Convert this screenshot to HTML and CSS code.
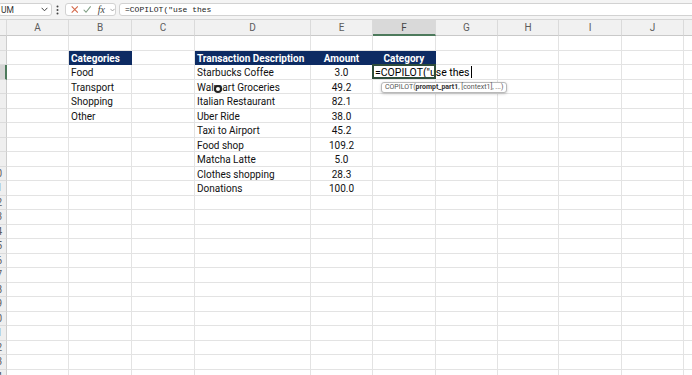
FILE: index.html
```html
<!DOCTYPE html>
<html lang="en">
<head>
    <meta charset="UTF-8">
    <meta name="viewport" content="width=device-width, initial-scale=1.0">
    <title>Expenses - Excel</title>
    <link rel="stylesheet" href="styles.css">
</head>
<body>
    <div class="formula-bar">
        <div class="name-box">
            <span class="name-text">UM</span>
            <svg class="chev" width="7" height="5" viewBox="0 0 7 5"><path d="M0.6 0.8 L3.5 3.8 L6.4 0.8" fill="none" stroke="#444" stroke-width="1"/></svg>
        </div>
        <svg class="dots" width="3" height="10" viewBox="0 0 3 10"><circle cx="1.5" cy="1.5" r="1" fill="#444"/><circle cx="1.5" cy="5" r="1" fill="#444"/><circle cx="1.5" cy="8.5" r="1" fill="#444"/></svg>
        <div class="fx-box">
            <svg width="9" height="9" viewBox="0 0 9 9"><path d="M0.8 0.8 L8.2 8.2 M8.2 0.8 L0.8 8.2" stroke="#d4694b" stroke-width="1.3" fill="none"/></svg>
            <svg width="10" height="9" viewBox="0 0 10 9"><path d="M0.8 4.8 L3.6 7.8 L9.2 0.8" stroke="#7f9e84" stroke-width="1.3" fill="none"/></svg>
            <span class="fx">fx</span>
            <svg width="6" height="4" viewBox="0 0 6 4"><path d="M0.5 0.6 L3 3.2 L5.5 0.6" fill="none" stroke="#888" stroke-width="0.9"/></svg>
        </div>
        <div class="formula-input">=COPILOT("use thes</div>
    </div>

    <div class="sheet" id="sheet"></div>

    <script>
        var cols = ["", "A", "B", "C", "D", "E", "F", "G", "H", "I", "J", "K"];
        var rowCount = 24;
        var activeRow = 3;
        var activeCol = "F";

        var data = {
            2: {B: "Categories", D: "Transaction Description", E: "Amount", F: "Category"},
            3: {B: "Food", D: "Starbucks Coffee", E: "3.0"},
            4: {B: "Transport", D: "Walmart Groceries", E: "49.2"},
            5: {B: "Shopping", D: "Italian Restaurant", E: "82.1"},
            6: {B: "Other", D: "Uber Ride", E: "38.0"},
            7: {D: "Taxi to Airport", E: "45.2"},
            8: {D: "Food shop", E: "109.2"},
            9: {D: "Matcha Latte", E: "5.0"},
            10: {D: "Clothes shopping", E: "28.3"},
            11: {D: "Donations", E: "100.0"}
        };

        var sheet = document.querySelector("#sheet");

        // column letters
        for(var c = 0; c < cols.length; c++){
            var head = document.createElement("div");
            head.className = c === 0 ? "corner" : "col-head";
            if(cols[c] === activeCol) head.className += " active";
            head.textContent = cols[c];
            sheet.appendChild(head);
        }

        for(var r = 1; r <= rowCount; r++){
            var rowHead = document.createElement("div");
            rowHead.className = "row-head";
            if(r === activeRow) rowHead.className += " active";
            var num = document.createElement("span");
            num.textContent = r;
            rowHead.appendChild(num);
            sheet.appendChild(rowHead);

            for(var c = 1; c < cols.length; c++){
                var cell = document.createElement("div");
                cell.className = "cell";
                var value = data[r] ? data[r][cols[c]] : undefined;

                if(value !== undefined){
                    cell.textContent = value;
                    if(r === 2) cell.className += " head";
                    if(cols[c] === "E" || (r === 2 && cols[c] === "F")) cell.className += " center";
                }
                if(r === 4 && cols[c] === "D"){
                    var pointer = document.createElement("span");
                    pointer.className = "pointer";
                    cell.appendChild(pointer);
                }
                if(r === activeRow && cols[c] === activeCol){
                    cell.className += " editing";
                    cell.innerHTML = '=COPILOT("use thes<span class="caret"></span>' +
                        '<div class="tip">COPILOT(<b>prompt_part1</b>, [context1], ...)</div>';
                }
                sheet.appendChild(cell);
            }
        }
    </script>
</body>
</html>
```

FILE: styles.css
```css
body {
    margin: 0;
    width: 692px;
    height: 375px;
    overflow: hidden;
    background-color: #fff;
    font-family: Roboto, "Liberation Sans", sans-serif;
}

.formula-bar {
    display: flex;
    align-items: center;
    height: 19px;
    background-color: #f4f4f4;
    border-bottom: 1px solid #d6d6d6;
}

.name-box {
    display: flex;
    align-items: center;
    justify-content: space-between;
    width: 54px;
    height: 13px;
    margin-left: -2px;
    padding: 0 3px 0 2px;
    box-sizing: border-box;
    background-color: #fff;
    border: 1px solid #d2d2d2;
    border-radius: 3px;
}

.name-text {
    font-size: 8.5px;
    color: #333;
}

.dots {
    margin: 0 6px 0 4px;
}

.fx-box {
    display: flex;
    align-items: center;
    gap: 5px;
    width: 51px;
    height: 13px;
    padding-left: 5px;
    box-sizing: border-box;
    background-color: #fff;
    border: 1px solid #d2d2d2;
    border-radius: 3px;
}

.fx {
    font-family: "Liberation Serif", serif;
    font-style: italic;
    font-size: 10px;
    color: #444;
    margin-left: 1px;
}

.formula-input {
    flex: 1;
    height: 13px;
    margin: 0 -3px 0 3px;
    padding-left: 5px;
    box-sizing: border-box;
    background-color: #fff;
    border: 1px solid #d2d2d2;
    border-radius: 3px;
    font-family: "Liberation Mono", monospace;
    font-size: 8px;
    line-height: 11px;
    color: #222;
}

.sheet {
    display: grid;
    grid-template-columns: 7px 62px 63px 63px 116px 62px 63px 62px 61px 63px 62px 60px;
    grid-template-rows: 16px;
    grid-auto-rows: 14.5px;
}

.corner,
.col-head {
    background-color: #f1f1f1;
    border-right: 1px solid #dadada;
    border-bottom: 1px solid #c9c9c9;
    box-sizing: border-box;
    font-size: 10px;
    line-height: 16px;
    text-align: center;
    color: #5c5c5c;
}

.col-head.active {
    background-color: #d9d9d9;
    border-bottom: 2px solid #4d7a5c;
    color: #444;
}

.row-head {
    background-color: #efefef;
    border-right: 1px solid #cdcdcd;
    border-bottom: 1px solid #dcdcdc;
    box-sizing: border-box;
    overflow: hidden;
    font-size: 10px;
    line-height: 14px;
    color: #5c5c5c;
}

.row-head span {
    display: block;
    width: 20px;
    margin-left: -13.5px;
    text-align: center;
}

.row-head.active {
    background-color: #d5d5d5;
    border-right: 2px solid #4d7a5c;
}

.cell {
    position: relative;
    border-right: 1px solid #e3e3e3;
    border-bottom: 1px solid #e3e3e3;
    box-sizing: border-box;
    padding: 1px 2px 0 2px;
    font-size: 10px;
    line-height: 14px;
    white-space: nowrap;
    overflow: hidden;
    color: #111;
}

.cell.center {
    text-align: center;
}

.cell.head {
    background-color: #0d2b63;
    border-color: #0d2b63;
    color: #fff;
    font-weight: bold;
}

.cell.editing {
    z-index: 2;
    overflow: visible;
    padding-left: 2px;
    font-size: 10.5px;
    color: #000;
}

.cell.editing::after {
    content: "";
    position: absolute;
    top: -1px;
    left: -1px;
    right: -1px;
    bottom: 0;
    border: 2px solid #2f4d3b;
}

.caret {
    display: inline-block;
    width: 1px;
    height: 12px;
    margin-left: 1px;
    vertical-align: -2px;
    background-color: #000;
}

.tip {
    position: absolute;
    top: 17px;
    left: 8px;
    height: 11px;
    padding: 0 3px;
    box-sizing: border-box;
    background-color: #fff;
    border: 1px solid #b9b9b9;
    border-radius: 3px;
    box-shadow: 0 1px 3px rgba(0,0,0,0.2);
    font-size: 7px;
    line-height: 9px;
    color: #555;
}

.tip b {
    color: #333;
}

.pointer {
    position: absolute;
    top: 5px;
    left: 19px;
    width: 4px;
    height: 4px;
    border: 2px solid #222;
    border-radius: 50%;
    background-color: #fff;
}
```
